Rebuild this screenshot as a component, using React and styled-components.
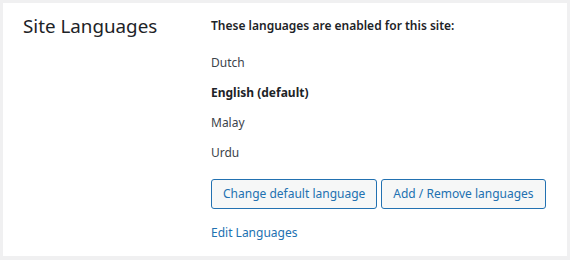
import React from "react";
import styled, { createGlobalStyle } from "styled-components";

const GlobalStyle = createGlobalStyle`
  html, body {
    margin: 0;
    padding: 0;
    background: #f0f0f1;
  }
  body {
    font-family: "Noto Sans", "Open Sans", sans-serif;
    color: #3c434a;
  }
`;

const Page = styled.div`
  width: 570px;
  height: 260px;
  box-sizing: border-box;
  padding: 3px 3px 4px 3px;
`;

const Panel = styled.section`
  height: 100%;
  background: #fff;
  display: grid;
  grid-template-columns: 208px 1fr;
`;

const Heading = styled.h2`
  margin: 0;
  padding: 11px 0 0 20px;
  font-size: 18.8px;
  line-height: 24px;
  font-weight: 400;
  color: #1d2327;
`;

const Content = styled.div`
  padding-top: 13px;
  display: flex;
  flex-direction: column;
  align-items: flex-start;
`;

const Intro = styled.p`
  margin: 0;
  font-size: 12px;
  line-height: 20px;
  font-weight: 600;
  color: #1d2327;
`;

const LangList = styled.ul`
  list-style: none;
  margin: 12px 0 0;
  padding: 0;
`;

const Lang = styled.li`
  font-size: 12px;
  line-height: 30px;
  font-weight: ${(p) => (p.$default ? 700 : 400)};
  color: ${(p) => (p.$default ? "#1d2327" : "#3c434a")};
`;

const Actions = styled.div`
  display: flex;
  gap: 4px;
  margin-top: 11px;
`;

const Button = styled.button`
  box-sizing: border-box;
  height: 30px;
  padding: 0 11px;
  border: 1px solid #2271b1;
  border-radius: 3px;
  background: #f6f7f7;
  color: #2271b1;
  font-family: inherit;
  font-size: 12px;
  line-height: 28px;
  cursor: pointer;
`;

const EditLink = styled.a`
  margin-top: 14px;
  font-size: 12px;
  line-height: 20px;
  color: #2271b1;
  text-decoration: none;
`;

const languages = [
  { name: "Dutch" },
  { name: "English (default)", isDefault: true },
  { name: "Malay" },
  { name: "Urdu" },
];

export default function App() {
  return (
    <>
      <GlobalStyle />
      <Page>
        <Panel>
          <Heading>Site Languages</Heading>
          <Content>
            <Intro>These languages are enabled for this site:</Intro>
            <LangList>
              {languages.map((l) => (
                <Lang key={l.name} $default={l.isDefault}>
                  {l.name}
                </Lang>
              ))}
            </LangList>
            <Actions>
              <Button>Change default language</Button>
              <Button>Add / Remove languages</Button>
            </Actions>
            <EditLink href="#">Edit Languages</EditLink>
          </Content>
        </Panel>
      </Page>
    </>
  );
}
